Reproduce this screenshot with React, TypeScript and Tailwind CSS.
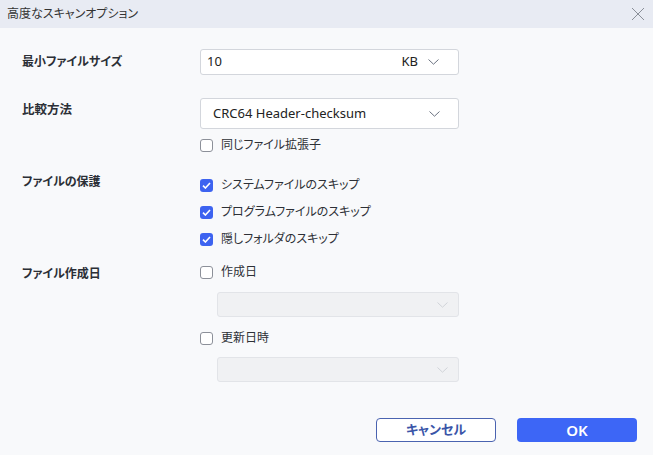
import React from 'react';

const font = '[font-family:"Noto_Sans","Noto_Sans_CJK_JP",sans-serif] [font-feature-settings:"palt"]';

function Chevron({ color = '#6b7280' }: { color?: string }) {
  return (
    <svg width="11" height="6" viewBox="0 0 11 6" fill="none">
      <path d="M0.5 0.5 L5.5 5.2 L10.5 0.5" stroke={color} strokeWidth="1" />
    </svg>
  );
}

function Check({ checked, label }: { checked?: boolean; label: string }) {
  return (
    <div className="flex h-[20px] items-center gap-[8px]">
      {checked ? (
        <span className="flex h-[13px] w-[13px] items-center justify-center rounded-[3px] bg-[#3d63f0]">
          <svg width="9" height="7" viewBox="0 0 9 7" fill="none">
            <path d="M1 3.6 L3.4 6 L8 1" stroke="#fff" strokeWidth="1.6" />
          </svg>
        </span>
      ) : (
        <span className="h-[13px] w-[13px] rounded-[3px] border border-[#8c9099] bg-white" />
      )}
      <span className="text-[12px] text-[#2d3036]">{label}</span>
    </div>
  );
}

function DisabledSelect() {
  return (
    <div className="ml-[17px] flex h-[25px] w-[242px] items-center justify-end rounded-[3px] border border-[#e2e4e8] bg-[#f0f1f3] pr-[10px]">
      <Chevron color="#d0d3d8" />
    </div>
  );
}

export default function App() {
  return (
    <div className={`${font} flex h-[455px] w-[653px] flex-col bg-[#f8f9fb]`}>
      <div className="flex h-[28px] items-center justify-between bg-[#e8ebf3] pl-[7px] pr-[8px]">
        <span className="text-[12px] text-[#333]">高度なスキャンオプション</span>
        <svg width="14" height="14" viewBox="0 0 14 14" fill="none">
          <path d="M1 1 L13 13 M13 1 L1 13" stroke="#8a8f98" strokeWidth="1" />
        </svg>
      </div>

      <div className="px-[22px] pt-[21px]">
        <div className="flex items-center">
          <span className="w-[178px] text-[12px] font-semibold text-[#2b2f36]">最小ファイルサイズ</span>
          <div className="flex h-[26px] w-[259px] items-center rounded-[3px] border border-[#d3d6dc] bg-white pl-[6px] pr-[19px]">
            <span className="flex-1 text-[13px] text-[#222]">10</span>
            <span className="mr-[10px] text-[13px] text-[#222]">KB</span>
            <Chevron />
          </div>
        </div>

        <div className="mt-[23px] flex items-start">
          <span className="w-[178px] pt-[3px] text-[12.5px] font-semibold text-[#2b2f36]">比較方法</span>
          <div className="flex flex-col">
            <div className="flex h-[31px] w-[259px] items-center justify-between rounded-[3px] border border-[#d3d6dc] bg-white pl-[12px] pr-[18px]">
              <span className="text-[13px] text-[#222]">CRC64 Header-checksum</span>
              <Chevron />
            </div>
            <div className="mt-[6px]">
              <Check label="同じファイル拡張子" />
            </div>
          </div>
        </div>

        <div className="mt-[20px] flex items-start">
          <span className="-mt-[2px] w-[178px] text-[12px] font-semibold text-[#2b2f36]">ファイルの保護</span>
          <div className="flex flex-col gap-[7px]">
            <Check checked label="システムファイルのスキップ" />
            <Check checked label="プログラムファイルのスキップ" />
            <Check checked label="隠しフォルダのスキップ" />
          </div>
        </div>

        <div className="mt-[13px] flex items-start">
          <span className="mt-[3px] w-[178px] text-[12px] font-semibold text-[#2b2f36]">ファイル作成日</span>
          <div className="flex flex-col">
            <Check label="作成日" />
            <div className="mt-[10px]">
              <DisabledSelect />
            </div>
            <div className="mt-[11px]">
              <Check label="更新日時" />
            </div>
            <div className="mt-[9px]">
              <DisabledSelect />
            </div>
          </div>
        </div>
      </div>

      <div className="mt-[36px] flex justify-end gap-[21px] pr-[16px]">
        <button className="flex h-[24px] w-[120px] items-center justify-center rounded-[4px] border border-[#4a63b0] bg-white text-[13px] font-semibold text-[#3a55a8]">
          キャンセル
        </button>
        <button className="flex h-[24px] w-[120px] items-center justify-center rounded-[4px] bg-[#3d66f6] text-[15px] font-semibold text-white">
          OK
        </button>
      </div>
    </div>
  );
}
